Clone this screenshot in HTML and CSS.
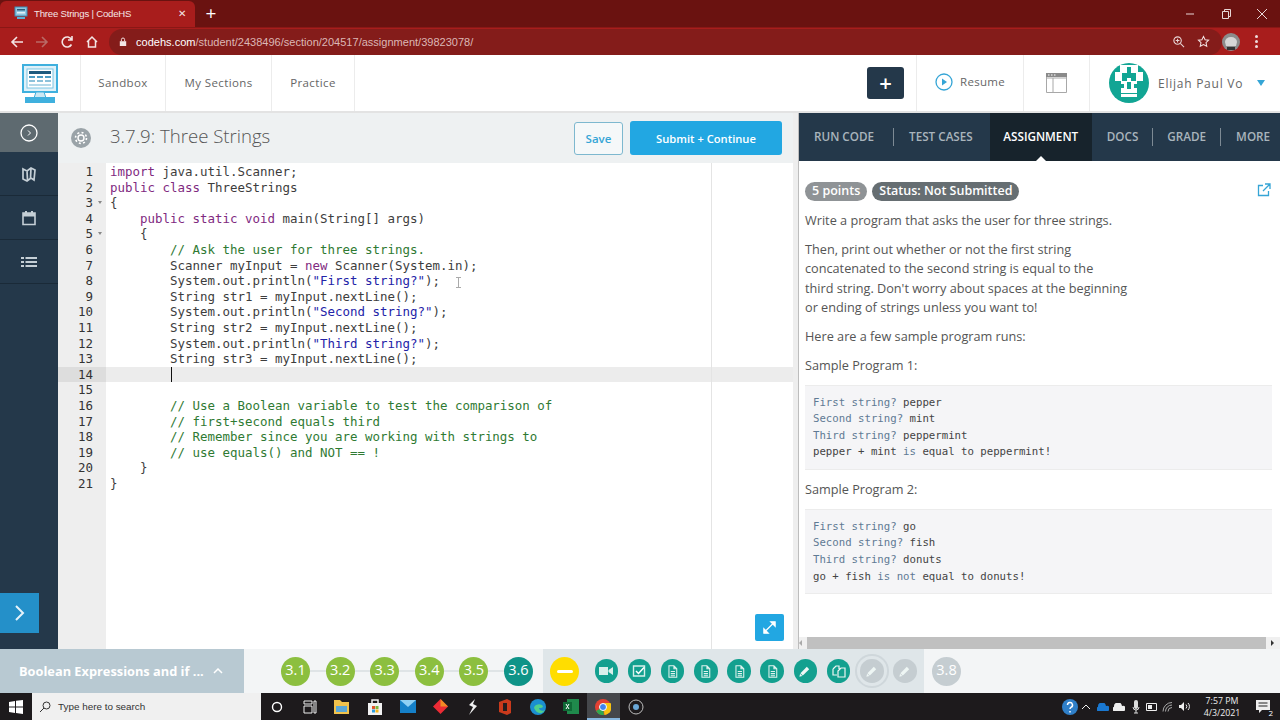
FILE: index.html

```html
<!DOCTYPE html>
<html lang="en">
<head>
  <meta charset="UTF-8">
  <title>Three Strings | CodeHS</title>
  <link rel="stylesheet" href="styles.css">
</head>
<body>
  <svg class="defs" width="0" height="0">
    <symbol id="i-doc" viewBox="0 0 24 24"><path d="M7 4h7l4 4v12H7z M14 4v4h4 M9.500 12h6 M9.500 15h6 M9.500 18h6" fill="none" stroke="#dff2ee" stroke-width="1.500"/></symbol>
    <symbol id="i-pencil" viewBox="0 0 24 24"><path d="M7.500 16.500L16 8" fill="none" stroke="#eef6f4" stroke-width="4.500"/><path d="M4.500 19.500l1-4 3 3z" fill="#eef6f4"/></symbol>
  </svg>

  <div class="tabstrip">
    <div class="tab">
      <svg class="favicon" viewBox="0 0 14 14"><rect x="1" y="1" width="12" height="9" fill="#8fc6e0" stroke="#3b8db5"/><rect x="3" y="3" width="8" height="1.500" fill="#2c5a78"/><rect x="3" y="6" width="8" height="1.500" fill="#dfeef6"/><rect x="3" y="11" width="8" height="2" fill="#5ab0d8"/></svg>
      <span class="tab-title">Three Strings | CodeHS</span>
      <span class="tab-close">✕</span>
    </div>
    <span class="tab-new">+</span>
    <div class="window-btns">
      <svg width="12" height="12" viewBox="0 0 12 12"><path d="M2 6h8" stroke="#e8d6d6"/></svg>
      <svg width="12" height="12" viewBox="0 0 12 12"><path d="M2.500 3.500h6v7h-6z M4.500 3.500v-2h6v7h-2" fill="none" stroke="#e8d6d6"/></svg>
      <svg width="12" height="12" viewBox="0 0 12 12"><path d="M1 1l10 10 M11 1L1 11" stroke="#e8d6d6"/></svg>
    </div>
  </div>

  <div class="toolbar">
    <svg class="tool" viewBox="0 0 16 16"><path d="M14 8H3 M8 3L3 8l5 5" fill="none" stroke="#f3e4e4" stroke-width="1.600"/></svg>
    <svg class="tool" viewBox="0 0 16 16"><path d="M2 8h11 M8 3l5 5-5 5" fill="none" stroke="#b96a66" stroke-width="1.600"/></svg>
    <svg class="tool" viewBox="0 0 16 16"><path d="M12.500 10.500A5 5 0 1 1 12.500 5.500 M13 2v4H9" fill="none" stroke="#f3e4e4" stroke-width="1.600"/></svg>
    <svg class="tool" viewBox="0 0 16 16"><path d="M3 8l5-5 5 5 M4.500 7v6h7V7" fill="none" stroke="#f3e4e4" stroke-width="1.500"/></svg>
    <div class="omnibox">
      <svg class="lock" viewBox="0 0 10 12"><path d="M1 5h8v6H1z" fill="#f3e4e4"/><path d="M3 5V3a2 2 0 0 1 4 0v2" fill="none" stroke="#f3e4e4" stroke-width="1.200"/></svg>
      <span class="url"><b>codehs.com</b>/student/2438496/section/204517/assignment/39823078/</span>
      <svg class="omni-icon" viewBox="0 0 14 14"><circle cx="6" cy="6" r="4" fill="none" stroke="#e8d6d6" stroke-width="1.200"/><path d="M9 9l4 4 M4 6h4 M6 4v4" stroke="#e8d6d6" stroke-width="1.100"/></svg>
      <svg class="omni-icon" viewBox="0 0 14 14"><path d="M7 1.500l1.700 3.600 3.800.5-2.800 2.600.8 3.900L7 10.200l-3.500 1.900.8-3.900L1.500 5.600l3.800-.5z" fill="none" stroke="#f3e4e4" stroke-width="1.100"/></svg>
    </div>
    <svg class="profile" viewBox="0 0 18 18"><circle cx="9" cy="9" r="9" fill="#8c8c8c"/><path d="M3 9a6 5 0 0 1 12 0l-1 4H4z" fill="#d6d6d6"/><path d="M5 14h8v3H5z" fill="#333"/></svg>
    <span class="dots"><i></i><i></i><i></i></span>
  </div>

  <header class="topnav">
    <div class="logo-cell">
      <svg width="36" height="40" viewBox="0 0 36 40">
        <rect x="1" y="1" width="34" height="27" fill="#dff1f9" stroke="#3fb0de" stroke-width="2"/>
        <rect x="5" y="5" width="26" height="19" fill="#fff" stroke="#7cc6e4"/>
        <rect x="7" y="7" width="22" height="3" fill="#1f5a7e"/>
        <rect x="7" y="12" width="6" height="2" fill="#4d9cc4"/><rect x="15" y="12" width="6" height="2" fill="#4d9cc4"/><rect x="23" y="12" width="6" height="2" fill="#4d9cc4"/>
        <rect x="7" y="16" width="6" height="2" fill="#8cc1da"/><rect x="15" y="16" width="6" height="2" fill="#8cc1da"/><rect x="23" y="16" width="6" height="2" fill="#8cc1da"/>
        <rect x="7" y="20" width="22" height="2" fill="#b5d9e9"/>
        <path d="M12 34l2-6h8l2 6z" fill="#cbe8f4" stroke="#3fb0de"/>
        <rect x="3" y="33" width="30" height="6" fill="#3fb0de"/>
      </svg>
    </div>
    <a class="nav-link nav-sandbox">Sandbox</a>
    <a class="nav-link nav-sections">My Sections</a>
    <a class="nav-link nav-practice">Practice</a>
    <div class="nav-right">
      <div class="plus-btn">+</div>
      <div class="resume">
        <svg width="18" height="18" viewBox="0 0 18 18"><circle cx="9" cy="9" r="8" fill="none" stroke="#35a5d6" stroke-width="1.300"/><path d="M7 5.500l5 3.500-5 3.500z" fill="#35a5d6"/></svg>
        <span>Resume</span>
      </div>
      <div class="win-cell">
        <svg width="21" height="20" viewBox="0 0 21 20"><path d="M.5.5h20v19H.5z M.5 5h20 M7 5v14.500" fill="none" stroke="#a8a8a8"/><path d="M0 0h21v4H0z" fill="#8a8a8a"/><path d="M2 1.500h1.500v1H2z M5 1.500h1.500v1H5z M8 1.500h1.500v1H8z" fill="#fff"/></svg>
      </div>
      <div class="user">
        <svg width="40" height="40" viewBox="0 0 40 40">
          <circle cx="20" cy="20" r="20" fill="#12a594"/>
          <g fill="#fff"><rect x="11" y="2" width="18" height="8"/><rect x="6" y="9" width="7" height="9"/><rect x="27" y="9" width="7" height="9"/><rect x="12" y="15" width="16" height="15"/><rect x="12" y="31" width="16" height="3"/></g>
          <g fill="#12a594"><rect x="18" y="4" width="4" height="8"/><rect x="13" y="11" width="5" height="7"/><rect x="22" y="11" width="5" height="7"/><rect x="18" y="19" width="4" height="7"/><rect x="12" y="21" width="3" height="4"/><rect x="25" y="21" width="3" height="4"/></g>
        </svg>
        <span class="user-name">Elijah Paul Vo</span>
        <span class="caret"></span>
      </div>
    </div>
  </header>

  <main class="workspace">
    <nav class="sidebar">
      <div class="side-item side-top">
        <svg width="18" height="18" viewBox="0 0 18 18"><circle cx="9" cy="9" r="8" fill="none" stroke="#fff" stroke-width="1.300"/><path d="M8 6.500L10.500 9 8 11.500" fill="none" stroke="#fff"/></svg>
      </div>
      <div class="side-item">
        <svg width="16" height="16" viewBox="0 0 16 16"><path d="M2 3l4 2 4-3 4 2-1 10-3-2-4 3-4-2z M6 5l.5 9 M10 2l-.5 10" fill="none" stroke="#c5cfd6" stroke-width="1.700"/></svg>
      </div>
      <div class="side-item">
        <svg width="16" height="16" viewBox="0 0 16 16"><path d="M2 3h12v11.500H2z" fill="none" stroke="#c5cfd6" stroke-width="1.600"/><path d="M2 3h12v3.500H2z M4 1h2v2H4z M10 1h2v2h-2z" fill="#c5cfd6"/></svg>
      </div>
      <div class="side-item">
        <svg width="16" height="16" viewBox="0 0 16 16"><path d="M0 3h3v2H0z M0 7h3v2H0z M0 11h3v2H0z M4.500 3H16v2H4.500z M4.500 7H16v2H4.500z M4.500 11H16v2H4.500z" fill="#c5cfd6"/></svg>
      </div>
      <div class="side-spacer"></div>
      <div class="side-expand">
        <svg width="14" height="20" viewBox="0 0 14 20"><path d="M3 3l7 7-7 7" fill="none" stroke="#e6f3fa" stroke-width="2"/></svg>
      </div>
    </nav>

    <section class="editor-pane">
      <div class="editor-head">
        <svg class="gear" width="20" height="20" viewBox="0 0 20 20"><circle cx="10" cy="10" r="10" fill="#9aa3a8"/><circle cx="10" cy="10" r="3" fill="none" stroke="#fff" stroke-width="1.400"/><circle cx="10" cy="10" r="5.500" fill="none" stroke="#fff" stroke-width="1.600" stroke-dasharray="2 2.300"/></svg>
        <h1 class="editor-title">3.7.9: Three Strings</h1>
        <button class="btn-save">Save</button>
        <button class="btn-submit">Submit + Continue</button>
      </div>
      <div class="editor">
        <div class="gutter">
          <div class="num">1</div>
          <div class="num">2</div>
          <div class="num fold">3</div>
          <div class="num">4</div>
          <div class="num fold">5</div>
          <div class="num">6</div>
          <div class="num">7</div>
          <div class="num">8</div>
          <div class="num">9</div>
          <div class="num">10</div>
          <div class="num">11</div>
          <div class="num">12</div>
          <div class="num">13</div>
          <div class="num num-active">14</div>
          <div class="num">15</div>
          <div class="num">16</div>
          <div class="num">17</div>
          <div class="num">18</div>
          <div class="num">19</div>
          <div class="num">20</div>
          <div class="num">21</div>
        </div>
        <div class="code">
          <div class="line"><span class="kw">import</span> java.util.Scanner;</div>
          <div class="line"><span class="kw">public</span> <span class="kw">class</span> ThreeStrings</div>
          <div class="line">{</div>
          <div class="line">    <span class="kw">public</span> <span class="kw">static</span> <span class="kw">void</span> main(String[] args)</div>
          <div class="line">    {</div>
          <div class="line">        <span class="com">// Ask the user for three strings.</span></div>
          <div class="line">        Scanner myInput = <span class="kw">new</span> Scanner(System.in);</div>
          <div class="line">        System.out.println(<span class="str">"First string?"</span>);</div>
          <div class="line">        String str1 = myInput.nextLine();</div>
          <div class="line">        System.out.println(<span class="str">"Second string?"</span>);</div>
          <div class="line">        String str2 = myInput.nextLine();</div>
          <div class="line">        System.out.println(<span class="str">"Third string?"</span>);</div>
          <div class="line">        String str3 = myInput.nextLine();</div>
          <div class="line line-active">        <span class="cursor"></span></div>
          <div class="line"> </div>
          <div class="line">        <span class="com">// Use a Boolean variable to test the comparison of</span></div>
          <div class="line">        <span class="com">// first+second equals third</span></div>
          <div class="line">        <span class="com">// Remember since you are working with strings to</span></div>
          <div class="line">        <span class="com">// use equals() and NOT == !</span></div>
          <div class="line">    }</div>
          <div class="line">}</div>
        </div>
        <div class="print-margin"></div>
        <svg class="ibeam" width="7" height="11" viewBox="0 0 7 11"><path d="M1 .5h5 M1 10.500h5 M3.500 .5v10" fill="none" stroke="#aaa"/></svg>
        <div class="btn-expand">
          <svg width="13" height="13" viewBox="0 0 15 15"><path d="M9 1h5v5z M6 14H1V9z M11 3.500L3.500 11" fill="#fff" stroke="#fff" stroke-width="1.400"/></svg>
        </div>
      </div>
    </section>

    <div class="splitter"></div>

    <section class="side-panel">
      <div class="tabs">
        <span class="tab-link tab-run">RUN CODE</span><i class="tab-sep"></i>
        <span class="tab-link tab-test">TEST CASES</span>
        <span class="tab-link tab-active">ASSIGNMENT</span>
        <span class="tab-link tab-docs">DOCS</span><i class="tab-sep"></i>
        <span class="tab-link tab-grade">GRADE</span><i class="tab-sep"></i>
        <span class="tab-link tab-more">MORE</span>
      </div>
      <div class="assignment">
        <div class="badges">
          <span class="badge badge-points">5 points</span>
          <span class="badge badge-status">Status: Not Submitted</span>
          <svg class="popout" width="14" height="14" viewBox="0 0 14 14"><path d="M6 2.500H1.500v10h10V8 M8 1h5v5 M13 1L6 8" fill="none" stroke="#35a5d6" stroke-width="1.300"/></svg>
        </div>
        <p>Write a program that asks the user for three strings.</p>
        <p>Then, print out whether or not the first string<br>concatenated to the second string is equal to the<br>third string. Don't worry about spaces at the beginning<br>or ending of strings unless you want to!</p>
        <p>Here are a few sample program runs:</p>
        <p>Sample Program 1:</p>
        <pre class="sample"><span class="prompt">First string?</span> pepper
<span class="prompt">Second string?</span> mint
<span class="prompt">Third string?</span> peppermint
pepper + mint <span class="prompt">is</span> equal to peppermint!</pre>
        <p>Sample Program 2:</p>
        <pre class="sample"><span class="prompt">First string?</span> go
<span class="prompt">Second string?</span> fish
<span class="prompt">Third string?</span> donuts
go + fish <span class="prompt">is not</span> equal to donuts!</pre>
      </div>
      <div class="hscroll">
        <span class="arrow-l"></span>
        <div class="hscroll-thumb"></div>
        <span class="arrow-r"></span>
      </div>
    </section>
  </main>

  <footer class="lessonbar">
    <div class="lesson-name"><span>Boolean Expressions and if ...</span><svg width="10" height="6" viewBox="0 0 10 6"><path d="M1 5l4-4 4 4" fill="none" stroke="#fff" stroke-width="1.500"/></svg></div>
    <div class="steps">
      <span class="step">3.1</span><i class="link"></i>
      <span class="step">3.2</span><i class="link"></i>
      <span class="step">3.3</span><i class="link"></i>
      <span class="step">3.4</span><i class="link"></i>
      <span class="step">3.5</span><i class="link"></i>
      <span class="step step-teal">3.6</span>
    </div>
    <div class="current">
      <span class="step step-yellow"><i class="minus"></i></span>
      <span class="dot"><svg width="16" height="16" viewBox="0 0 16 16"><path d="M1 4h9v8H1z M10.500 7L15 4v8l-4.500-3z" fill="#d9efeb"/></svg></span>
      <span class="dot"><svg width="16" height="16" viewBox="0 0 16 16"><path d="M2.500 3h11v10h-11z" fill="none" stroke="#d9efeb" stroke-width="1.400"/><path d="M5 8l2.500 2.500L13 4.500" fill="none" stroke="#fff" stroke-width="1.500"/></svg></span>
      <span class="dot"><svg width="17" height="17"><use href="#i-doc"/></svg></span>
      <span class="dot"><svg width="17" height="17"><use href="#i-doc"/></svg></span>
      <span class="dot"><svg width="17" height="17"><use href="#i-doc"/></svg></span>
      <span class="dot"><svg width="17" height="17"><use href="#i-doc"/></svg></span>
      <span class="dot"><svg width="18" height="18"><use href="#i-pencil"/></svg></span>
      <span class="dot"><svg width="16" height="16" viewBox="0 0 16 16"><path d="M2 6l3-3h3v3 M2 6v6h4 M7 8l3-3h4v9H7z" fill="none" stroke="#eef6f4" stroke-width="1.200"/></svg></span>
      <span class="dot dot-off dot-ring"><svg width="18" height="18"><use href="#i-pencil"/></svg></span>
      <span class="dot dot-off"><svg width="18" height="18"><use href="#i-pencil"/></svg></span>
    </div>
    <div class="next">
      <span class="step step-grey">3.8</span>
    </div>
  </footer>

  <div class="taskbar">
    <div class="start"><svg width="14" height="14" viewBox="0 0 14 14"><path d="M0 2l6-1v5.500H0z M7 .8L14 0v6.500H7z M0 7.500h6V13l-6-1z M7 7.500h7V14l-7-1z" fill="#fff"/></svg></div>
    <div class="search">
      <svg width="12" height="12" viewBox="0 0 12 12"><circle cx="7.500" cy="4.500" r="3.500" fill="none" stroke="#333"/><path d="M5 7l-4 4" stroke="#333"/></svg>
      <span>Type here to search</span>
    </div>
    <div class="apps">
      <span class="app"><svg width="12" height="12" viewBox="0 0 12 12"><circle cx="6" cy="6" r="4.500" fill="none" stroke="#fff" stroke-width="1.400"/></svg></span>
      <span class="app"><svg width="14" height="14" viewBox="0 0 14 14"><path d="M1 1h8v3H1z M1 6h8v7H1z M11 1h2v12h-2z" fill="none" stroke="#eee"/></svg></span>
      <span class="app"><svg width="16" height="14" viewBox="0 0 16 14"><path d="M0 0h6l2 2h7v12H0z" fill="#f0c24c"/><path d="M2 6h11v6H2z" fill="#5aa7d6"/></svg></span>
      <span class="app"><svg width="14" height="16" viewBox="0 0 14 16"><path d="M0 4h14v12H0z" fill="#f2f2f2"/><path d="M4 4V1h6v3" fill="none" stroke="#f2f2f2" stroke-width="1.500"/><path d="M4 7h3v3H4z" fill="#e2552b"/><path d="M7.500 7h3v3h-3z" fill="#7db840"/><path d="M4 10.500h3v3H4z" fill="#2c9ddf"/><path d="M7.500 10.500h3v3h-3z" fill="#f4b41a"/></svg></span>
      <span class="app"><svg width="16" height="13" viewBox="0 0 16 13"><path d="M0 0h16v13H0z" fill="#1580c8"/><path d="M0 0l8 7 8-7z" fill="#8fd0f4"/></svg></span>
      <span class="app"><svg width="15" height="15" viewBox="0 0 15 15"><path d="M7.500 0L15 7.500 7.500 15 0 7.500z" fill="#ec2b35"/><path d="M7.500 0L15 7.500H7.500z" fill="#f08a24"/></svg></span>
      <span class="app"><svg width="10" height="16" viewBox="0 0 10 16"><path d="M7 0L1 6l4 2-4 8 8-9-4-2z" fill="#f0f0f0"/></svg></span>
      <span class="app"><svg width="13" height="16" viewBox="0 0 13 16"><path d="M0 3l8-3 4 2v12l-4 2-8-3z" fill="#c93a1c"/><path d="M4 4h4v8H4z" fill="#241d1d"/></svg></span>
      <span class="app"><svg width="16" height="16" viewBox="0 0 16 16"><circle cx="8" cy="8" r="8" fill="#1b8fd0"/><path d="M4 9a5 4 0 0 1 9-2c0 2-2 2-4 2 0 2 3 4 6 2-2 4-8 5-11-2z" fill="#4fd08e"/></svg></span>
      <span class="app"><svg width="16" height="15" viewBox="0 0 16 15"><path d="M4 0h12v15H4z" fill="#1f8a4c"/><path d="M0 3h9v9H0z" fill="#0f6a36"/><path d="M3 5l3 5 M6 5l-3 5" stroke="#fff"/></svg></span>
      <span class="app app-active"><svg width="16" height="16" viewBox="0 0 16 16"><circle cx="8" cy="8" r="8" fill="#e34133"/><path d="M8 8L1 12a8 8 0 0 0 8 4z" fill="#2fa84f"/><path d="M8 4h7.500a8 8 0 0 1-6 12z" fill="#f8c30f"/><circle cx="8" cy="8" r="3.500" fill="#3f83f0" stroke="#fff"/></svg></span>
      <span class="app"><svg width="16" height="16" viewBox="0 0 16 16"><circle cx="8" cy="8" r="7" fill="none" stroke="#bbb"/><circle cx="8" cy="8" r="3" fill="#6aa8d8"/></svg></span>
    </div>
    <div class="tray">
      <span class="tray-item"><svg width="16" height="16" viewBox="0 0 16 16"><circle cx="8" cy="8" r="8" fill="#2f7fc8"/><path d="M5.500 6a2.500 2.500 0 1 1 3.500 2.300c-.7.400-1 .8-1 1.700 M8 12v1.500" fill="none" stroke="#fff" stroke-width="1.500"/></svg></span>
      <span class="tray-item"><svg width="10" height="6" viewBox="0 0 10 6"><path d="M1 5l4-4 4 4" fill="none" stroke="#eee"/></svg></span>
      <span class="tray-item"><svg width="12" height="8" viewBox="0 0 12 8"><path d="M1 8a2 2 0 0 1 0-4 4 4 0 0 1 8-1 2.500 2.500 0 0 1 2 5z" fill="#1a78d0"/></svg></span>
      <span class="tray-item"><svg width="12" height="8" viewBox="0 0 12 8"><path d="M1 8a2 2 0 0 1 0-4 4 4 0 0 1 8-1 2.500 2.500 0 0 1 2 5z" fill="#eee"/></svg></span>
      <span class="tray-item"><svg width="8" height="14" viewBox="0 0 8 14"><rect x="2" y="0" width="4" height="9" rx="2" fill="#ddd"/><path d="M1 7a3 3 0 0 0 6 0 M4 10v3 M2 13h4" fill="none" stroke="#ddd"/></svg></span>
      <span class="tray-item"><svg width="12" height="8" viewBox="0 0 12 8"><path d="M.5.5h10v7H.5z" fill="none" stroke="#eee"/><path d="M2 2h4v4H2z" fill="#eee"/></svg></span>
      <span class="tray-item"><svg width="12" height="11" viewBox="0 0 12 11"><path d="M1 10.500a9 9 0 0 1 9-9 M3.500 10.500a6.500 6.500 0 0 1 6.500-6.500 M6 10.500A4 4 0 0 1 10 6.500" fill="none" stroke="#aaa"/></svg></span>
      <span class="tray-item"><svg width="12" height="11" viewBox="0 0 12 11"><path d="M0 4h2l3-3v9L2 7H0z" fill="#eee"/><path d="M7 3.500a3 3 0 0 1 0 4 M9 2a5 5 0 0 1 0 7" fill="none" stroke="#eee"/></svg></span>
      <div class="clock"><div>7:57 PM</div><div>4/3/2021</div></div>
      <span class="notify"><svg width="14" height="14" viewBox="0 0 14 14"><path d="M0 0h14v10H6l-3 3v-3H0z" fill="#eee"/><path d="M2.500 3h9 M2.500 6h9" stroke="#222"/></svg><b>2</b></span>
    </div>
  </div>
</body>
</html>
```

FILE: styles.css

```css
html, body {
  margin: 0;
  height: 720px;
  overflow: hidden;
}
body {
  display: grid;
  grid-template-rows: 27px 28px 58px 536px 44px 27px;
  font-family: "Open Sans", Arial, sans-serif;
  color: #555;
  background: #fff;
}
.defs {
  position: absolute;
}
svg {
  display: block;
  flex: none;
}

/* browser chrome */
.tabstrip {
  background: #6a1210;
  display: flex;
  align-items: flex-end;
}
.tab {
  width: 195px;
  height: 26px;
  box-sizing: border-box;
  padding: 0 9px 2px 14px;
  background: #a81d1c;
  border-radius: 6px 6px 0 0;
  display: flex;
  align-items: center;
  color: #f4e6e6;
}
.favicon {
  width: 14px;
  height: 14px;
  margin-right: 6px;
}
.tab-title {
  flex: 1;
  font-family: "Liberation Sans", Arial, sans-serif;
  font-size: 9.600px;
  letter-spacing: -.2px;
}
.tab-close {
  font-size: 10px;
}
.tab-new {
  margin: 0 0 0 10px;
  width: 12px;
  height: 26px;
  color: #fff;
  font-size: 19px;
  line-height: 25px;
  text-align: center;
}
.window-btns {
  margin-left: auto;
  height: 27px;
  display: flex;
  align-items: center;
  gap: 24px;
  padding-right: 12px;
}
.toolbar {
  background: #a81d1c;
  display: flex;
  align-items: center;
  padding-left: 9px;
  border-top: 1px solid #8a1715;
  box-sizing: border-box;
}
.tool {
  width: 16px;
  height: 16px;
  margin-right: 9px;
}
.omnibox {
  width: 1113px;
  height: 26px;
  box-sizing: border-box;
  border-radius: 13px;
  background: #841c1a;
  display: flex;
  align-items: center;
  padding: 0 0 0 10px;
  font-family: "Liberation Sans", Arial, sans-serif;
  font-size: 11.040px;
}
.lock {
  width: 8px;
  height: 10px;
  margin-right: 9px;
}
.url {
  flex: 1;
  color: #dcb7b5;
}
.url b {
  color: #fff;
  font-weight: 400;
}
.omni-icon {
  width: 13px;
  height: 13px;
  margin-right: 12px;
}
.profile {
  width: 18px;
  height: 18px;
}
.dots {
  margin-left: 15px;
  display: flex;
  flex-direction: column;
  gap: 2px;
}
.dots i {
  width: 3px;
  height: 3px;
  background: #eedcdc;
  border-radius: 50%;
}

/* site nav */
.topnav {
  display: flex;
  align-items: stretch;
  background: #fff;
  border-bottom: 2px solid #e3e3e3;
  box-sizing: border-box;
}
.logo-cell {
  width: 81px;
  box-sizing: border-box;
  padding: 9px 0 0 22px;
  border-right: 1px solid #ececec;
}
.nav-link {
  box-sizing: border-box;
  display: flex;
  align-items: center;
  justify-content: center;
  padding-bottom: 2px;
  font-size: 11.500px;
  letter-spacing: .4px;
  color: #666;
  border-right: 1px solid #ececec;
}
.nav-sandbox { width: 85px; }
.nav-sections { width: 106px; }
.nav-practice { width: 83px; }
.nav-right {
  margin-left: auto;
  display: flex;
  align-items: stretch;
}
.plus-btn {
  width: 37px;
  height: 32px;
  align-self: center;
  margin-right: 12px;
  background: #24384a;
  color: #fff;
  border-radius: 3px;
  font-size: 22px;
  font-weight: 600;
  line-height: 30px;
  text-align: center;
}
.resume {
  width: 107px;
  box-sizing: border-box;
  display: flex;
  align-items: center;
  gap: 7px;
  padding: 0 0 3px 18px;
  border-left: 1px solid #ececec;
  font-size: 11.500px;
  letter-spacing: .3px;
  color: #666;
}
.win-cell {
  width: 67px;
  box-sizing: border-box;
  display: flex;
  align-items: center;
  justify-content: center;
  border-left: 1px solid #ececec;
  border-right: 1px solid #ececec;
}
.user {
  width: 190px;
  box-sizing: border-box;
  display: flex;
  align-items: center;
  padding-left: 19px;
}
.user-name {
  margin-left: 9px;
  font-size: 12px;
  letter-spacing: .75px;
  color: #666;
}
.caret {
  margin-left: 14px;
  border: 4px solid transparent;
  border-top: 6px solid #35a5d6;
  border-bottom: 0;
}

/* workspace */
.workspace {
  display: grid;
  grid-template-columns: 58px 735px 6px 481px;
  min-height: 0;
}
.sidebar {
  background: #24384a;
  display: flex;
  flex-direction: column;
}
.side-item {
  height: 44px;
  flex: none;
  box-sizing: border-box;
  display: flex;
  align-items: center;
  justify-content: center;
  border-bottom: 1px solid #1a2a38;
}
.side-top {
  height: 39px;
  background: #5e6a70;
  border: 0;
}
.side-spacer {
  flex: 1;
}
.side-expand {
  width: 39px;
  height: 40px;
  margin-bottom: 16px;
  background: #2490c9;
  display: flex;
  align-items: center;
  justify-content: center;
}
.editor-pane {
  display: flex;
  flex-direction: column;
  min-height: 0;
}
.editor-head {
  height: 50px;
  flex: none;
  box-sizing: border-box;
  background: #eef1f2;
  display: flex;
  align-items: center;
  padding: 0 11px 0 13px;
}
.editor-title {
  margin: 0 0 5px 19px;
  flex: 1;
  font-size: 18.600px;
  font-weight: 300;
  color: #555;
}
.btn-save {
  width: 49px;
  height: 33px;
  padding: 0;
  font: 600 11.500px "Open Sans", sans-serif;
  color: #35a5d6;
  background: #f5f8f9;
  border: 1px solid #7db8cf;
  border-radius: 3px;
}
.btn-submit {
  width: 152px;
  height: 34px;
  margin-left: 7px;
  padding: 0;
  font: 600 11.200px "Open Sans", sans-serif;
  color: #fff;
  background: #22a7e2;
  border: 0;
  border-radius: 3px;
}
.editor {
  position: relative;
  flex: 1;
  display: flex;
  background: #fff;
  font-family: "DejaVu Sans Mono", monospace;
  font-size: 12.460px;
  line-height: 15.600px;
  min-height: 0;
  overflow: hidden;
}
.gutter {
  width: 48px;
  flex: none;
  padding-top: 1px;
  background: #eeeeee;
  color: #333;
}
.num {
  height: 15.600px;
  padding-right: 13px;
  text-align: right;
  position: relative;
}
.fold::after {
  content: "";
  position: absolute;
  right: 4px;
  top: 6px;
  border: 2.500px solid transparent;
  border-top: 3px solid #888;
  border-bottom: 0;
}
.num-active {
  background: #dddddd;
}
.code {
  flex: 1;
  padding-top: 1px;
  color: #3d3d3d;
}
.line {
  height: 15.600px;
  padding-left: 4px;
  white-space: pre;
}
.line-active {
  background: #ececec;
}
.kw { color: #7f2a7f; }
.com { color: #2f7a33; }
.str { color: #2323a8; }
.cursor {
  display: inline-block;
  width: 1px;
  height: 15px;
  margin-left: 1px;
  vertical-align: top;
  background: #111;
}
.print-margin {
  position: absolute;
  left: 653px;
  top: 0;
  bottom: 0;
  width: 1px;
  background: #e4e4e4;
}
.ibeam {
  position: absolute;
  left: 397px;
  top: 114px;
}
.btn-expand {
  position: absolute;
  left: 697px;
  bottom: 8px;
  width: 29px;
  height: 27px;
  background: #22a7e2;
  border-radius: 2px;
  display: flex;
  align-items: center;
  justify-content: center;
}
.splitter {
  background: #eeeeee;
  border-right: 1px solid #bdbdbd;
}

/* assignment panel */
.side-panel {
  display: flex;
  flex-direction: column;
  min-height: 0;
}
.tabs {
  height: 48px;
  flex: none;
  background: #24384a;
  display: flex;
  align-items: center;
  font-size: 11.700px;
  font-weight: 600;
  color: #a9b4bc;
}
.tab-link {
  height: 48px;
  line-height: 47px;
  white-space: nowrap;
}
.tab-run { margin-left: 15px; margin-right: 19px; }
.tab-test { margin-left: 15px; margin-right: 17px; }
.tab-active {
  position: relative;
  width: 102px;
  text-align: center;
  background: #17232c;
  color: #fff;
}
.tab-active::after {
  content: "";
  position: absolute;
  left: 46px;
  bottom: 0;
  border: 5px solid transparent;
  border-bottom: 5px solid #fff;
  border-top: 0;
}
.tab-docs { margin-left: 15px; margin-right: 14px; }
.tab-grade { margin-left: 14px; margin-right: 14px; }
.tab-more { margin-left: 15px; }
.tab-sep {
  width: 1px;
  height: 18px;
  background: #7d8a94;
}
.assignment {
  flex: 1;
  padding: 21px 8px 0 6px;
  font-size: 12.700px;
  line-height: 19.500px;
  color: #555;
  min-height: 0;
}
.badges {
  position: relative;
  display: flex;
  gap: 5px;
  margin-bottom: 10px;
}
.badge {
  height: 19px;
  line-height: 18px;
  padding: 0 7px;
  border-radius: 10px;
  color: #fff;
  font-size: 12.500px;
  font-weight: 600;
}
.badge-points { background: #8f9396; }
.badge-status { background: #666e72; }
.popout {
  position: absolute;
  right: 1px;
  top: 1px;
}
.assignment p {
  margin: 0 0 9.300px;
}
.sample {
  margin: 0 0 10px;
  padding: 9px 8px 8px;
  background: #f5f5f7;
  border-top: 1px solid #ececec;
  border-bottom: 1px solid #ececec;
  font-family: "DejaVu Sans Mono", monospace;
  font-size: 10.700px;
  line-height: 16.600px;
  color: #444;
}
.prompt { color: #5f7a94; }
.hscroll {
  height: 12px;
  flex: none;
  display: flex;
  align-items: center;
  background: #f0f0f0;
}
.hscroll-thumb {
  width: 459px;
  height: 12px;
  margin: 0 5px;
  background: #c0c0c0;
}
.arrow-l, .arrow-r {
  border: 3px solid transparent;
}
.arrow-l {
  border-right: 3px solid #aaa;
  border-left: 0;
}
.arrow-r {
  border-left: 3px solid #333;
  border-right: 0;
}

/* lesson bar */
.lessonbar {
  display: flex;
  background: #f3f5f6;
}
.lesson-name {
  width: 244px;
  box-sizing: border-box;
  padding-left: 19px;
  background: #b8c9d2;
  color: #fff;
  font-size: 12.800px;
  font-weight: 700;
  display: flex;
  align-items: center;
  gap: 9px;
}
.steps {
  width: 299px;
  box-sizing: border-box;
  padding-left: 37px;
  display: flex;
  align-items: center;
}
.step {
  width: 29px;
  height: 29px;
  flex: none;
  border-radius: 50%;
  background: #8cbf3f;
  color: #fff;
  font-size: 14.500px;
  line-height: 26px;
  text-align: center;
}
.step-teal { background: #0f9488; }
.step-yellow {
  background: #ffdd00;
  display: flex;
  align-items: center;
  justify-content: center;
}
.step-grey { background: #c5cdd1; }
.minus {
  width: 16px;
  height: 3px;
  background: #fff;
  border-radius: 2px;
}
.link {
  width: 15.600px;
  height: 2px;
  flex: none;
  background: #dfe4e6;
}
.current {
  width: 381px;
  box-sizing: border-box;
  padding-left: 7px;
  background: #dfe6e9;
  display: flex;
  align-items: center;
}
.dot {
  width: 23.500px;
  height: 23.500px;
  flex: none;
  margin-right: 9.700px;
  border-radius: 50%;
  background: #13a08f;
  display: flex;
  align-items: center;
  justify-content: center;
}
.current .step-yellow {
  margin-right: 15.500px;
}
.dot-off {
  background: #c5cdd1;
}
.dot-ring {
  box-shadow: 0 0 0 3px #dfe6e9, 0 0 0 5px #cfd7db;
}
.next {
  padding-left: 8px;
  display: flex;
  align-items: center;
}

/* windows taskbar */
.taskbar {
  background: #1d1a1c;
  display: flex;
  align-items: center;
}
.start {
  width: 32px;
  display: flex;
  justify-content: center;
}
.search {
  width: 229px;
  height: 27px;
  box-sizing: border-box;
  padding-left: 7px;
  background: #f0f0f0;
  display: flex;
  align-items: center;
  gap: 7px;
  color: #333;
  font-family: "Liberation Sans", Arial, sans-serif;
  font-size: 9.900px;
}
.apps {
  display: flex;
  height: 27px;
}
.app {
  width: 32.600px;
  display: flex;
  align-items: center;
  justify-content: center;
}
.app-active {
  background: #45474b;
  box-shadow: inset 0 -2px 0 #88b8e0;
}
.tray {
  margin-left: auto;
  display: flex;
  align-items: center;
  padding-right: 10px;
}
.tray-item {
  width: 16.400px;
  display: flex;
  justify-content: center;
}
.clock {
  width: 50px;
  margin-left: 4px;
  color: #eee;
  font-size: 8.800px;
  line-height: 12px;
  text-align: center;
}
.notify {
  position: relative;
  margin-left: 9px;
}
.notify b {
  position: absolute;
  right: -3px;
  bottom: -3px;
  color: #fff;
  font-size: 8px;
  font-weight: 400;
  line-height: 9px;
}
```
